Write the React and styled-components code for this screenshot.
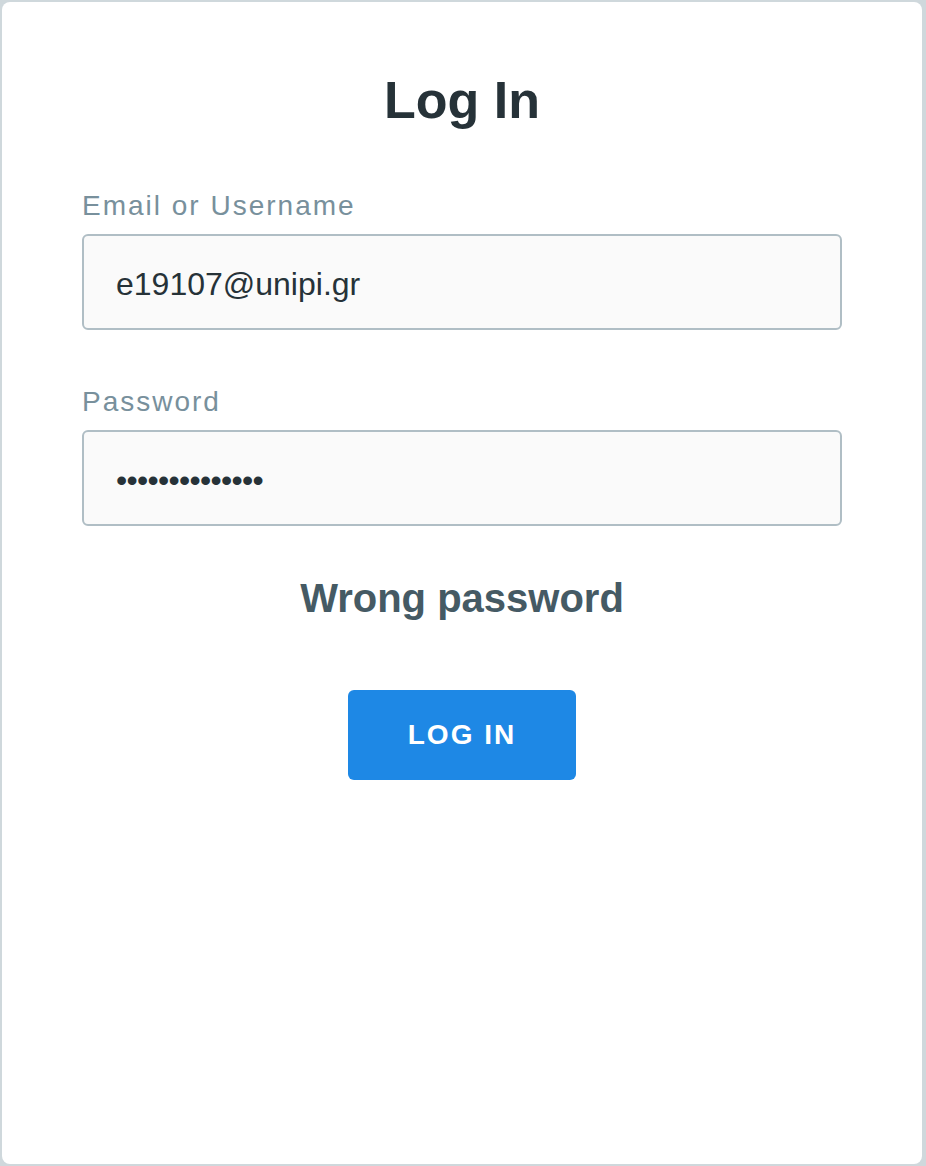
import React from 'react'
import styled, { createGlobalStyle } from 'styled-components'

const GlobalStyle = createGlobalStyle`
  html, body {
    margin: 0;
    padding: 0;
    background: #cfd8dc;
  }
  body {
    padding: 2px 4px 2px 2px;
    font-family: 'Liberation Sans', Arial, sans-serif;
  }
`

export default function App() {
  return (
    <>
      <GlobalStyle />
      <Card>
        <Title>Log In</Title>
        <Form onSubmit={(e) => e.preventDefault()}>
          <Field>
            <Label htmlFor="user">Email or Username</Label>
            <Input id="user" type="text" defaultValue="e19107@unipi.gr" />
          </Field>
          <Field>
            <Label htmlFor="pass">Password</Label>
            <Input id="pass" type="password" defaultValue="supersecret123" />
          </Field>
          <ErrorText>Wrong password</ErrorText>
          <LogInButton type="submit">LOG IN</LogInButton>
        </Form>
      </Card>
    </>
  )
}

const Card = styled.main`
  box-sizing: border-box;
  width: 920px;
  height: 1162px;
  background: #fff;
  border-radius: 8px;
  padding: 68px 80px 0 80px;
  display: flex;
  flex-direction: column;
`

const Title = styled.h1`
  margin: 0;
  text-align: center;
  font-size: 52px;
  font-weight: 700;
  color: #263238;
`

const Form = styled.form`
  display: flex;
  flex-direction: column;
  align-items: center;
  margin-top: 60px;
`

const Field = styled.div`
  align-self: stretch;
  display: flex;
  flex-direction: column;
  gap: 12px;
  & + & {
    margin-top: 56px;
  }
`

const Label = styled.label`
  font-size: 28px;
  letter-spacing: 2px;
  color: #78909c;
`

const Input = styled.input`
  box-sizing: border-box;
  width: 100%;
  height: 96px;
  padding: 4px 32px 0 32px;
  border: 2px solid #b0bec5;
  border-radius: 6px;
  background: #fafafa;
  font-family: 'Liberation Sans', Arial, sans-serif;
  font-size: 32px;
  color: #263238;
  outline: none;
  &[type='password'] {
    letter-spacing: -0.7px;
  }
`

const ErrorText = styled.p`
  margin: 50px 0 0 0;
  font-size: 40px;
  font-weight: 700;
  color: #455a64;
  text-align: center;
`

const LogInButton = styled.button`
  margin-top: 69px;
  width: 228px;
  height: 90px;
  border: none;
  border-radius: 6px;
  background: #1e88e5;
  color: #fff;
  font-family: 'Liberation Sans', Arial, sans-serif;
  font-size: 28px;
  font-weight: 700;
  letter-spacing: 2px;
  padding: 0;
  cursor: pointer;
`
